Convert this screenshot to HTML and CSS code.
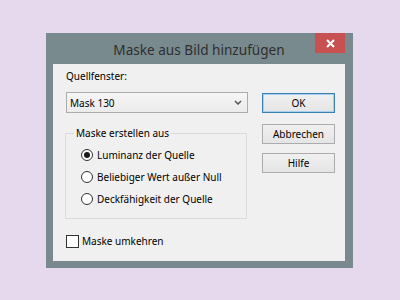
FILE: index.html
```html
<!DOCTYPE html>
<html lang="de">
<head>
<meta charset="utf-8">
<link rel="stylesheet" href="styles.css">
</head>
<body>
<div class="window">
  <div class="titlebar">
    <span></span>
    <span class="title">Maske aus Bild hinzufügen</span>
    <button class="close" aria-label="Schließen">
      <svg width="9" height="9" viewBox="0 0 9 9"><path d="M1 1L8 8M8 1L1 8" stroke="#fff" stroke-width="2" fill="none"/></svg>
    </button>
  </div>
  <div class="client">
    <div class="leftcol">
      <div class="label">Quellfenster:</div>
      <div class="select">
        <span>Mask 130</span>
        <svg width="8" height="5" viewBox="0 0 8 5"><path d="M1 1L4 4L7 1" stroke="#555" stroke-width="1.5" fill="none"/></svg>
      </div>
      <div class="group">
        <span class="legend">Maske erstellen aus</span>
        <div class="radio"><span class="dot checked"></span><span>Luminanz der Quelle</span></div>
        <div class="radio"><span class="dot"></span><span>Beliebiger Wert außer Null</span></div>
        <div class="radio"><span class="dot"></span><span>Deckfähigkeit der Quelle</span></div>
      </div>
      <div class="check"><span class="box"></span><span>Maske umkehren</span></div>
    </div>
    <div class="rightcol">
      <div class="btn default">OK</div>
      <div class="btn">Abbrechen</div>
      <div class="btn">Hilfe</div>
    </div>
  </div>
</div>
</body>
</html>
```
FILE: styles.css
```css
html, body {
  margin: 0;
  padding: 0;
}
body {
  background: #e7d9ed;
  width: 400px;
  height: 300px;
  overflow: hidden;
  font-family: "Noto Sans", "Open Sans", sans-serif;
  font-size: 10px;
  color: #000;
  white-space: nowrap;
}
.window {
  margin: 33px 0 0 46px;
  width: 307px;
  height: 235px;
  box-sizing: border-box;
  background: #798a8f;
  padding: 0 8px 7px 7px;
  display: flex;
  flex-direction: column;
}
.titlebar {
  height: 31px;
  flex-shrink: 0;
  display: grid;
  grid-template-columns: 1fr auto 1fr;
  align-items: center;
}
.title {
  font-size: 13.6px;
  color: #2e2e2e;
  padding-top: 2px;
}
.close {
  justify-self: end;
  align-self: start;
  width: 30px;
  height: 20px;
  border: 0;
  padding: 0;
  margin: 0;
  background: #c75050;
  display: flex;
  align-items: center;
  justify-content: center;
}
.close svg { display: block; }
.client {
  flex: 1;
  background: #f0f0f0;
  display: flex;
}
.leftcol {
  width: 183px;
  flex-shrink: 0;
  margin-left: 12px;
  display: flex;
  flex-direction: column;
}
.label {
  margin: 4px 0 0 1px;
  line-height: 16px;
  height: 16px;
}
.select {
  margin: 8px 0 0 1px;
  height: 21px;
  box-sizing: border-box;
  border: 1px solid #acacac;
  background: linear-gradient(#f6f6f6, #ebebeb);
  display: flex;
  align-items: center;
  justify-content: space-between;
  padding: 0 5px 0 3px;
}
.select svg { display: block; }
.group {
  margin-top: 20px;
  width: 182px;
  height: 86px;
  box-sizing: border-box;
  border: 1px solid #dcdcdc;
  display: flex;
  flex-direction: column;
  padding: 0 0 0 15px;
}
.legend {
  margin: -9px 0 0 -7px;
  align-self: flex-start;
  background: #f0f0f0;
  padding: 0 2px;
  line-height: 16px;
  height: 16px;
}
.radio {
  height: 22px;
  display: flex;
  align-items: center;
}
.group .radio:nth-of-type(1) { margin-top: 3px; }
.dot {
  width: 12px;
  height: 12px;
  flex-shrink: 0;
  box-sizing: border-box;
  border: 1px solid #333;
  border-radius: 50%;
  background: #fff;
  margin-right: 4px;
  display: flex;
  align-items: center;
  justify-content: center;
}
.dot.checked::after {
  content: "";
  width: 6px;
  height: 6px;
  border-radius: 50%;
  background: #1a1a1a;
}
.check {
  margin: 14px 0 0 1px;
  height: 16px;
  display: flex;
  align-items: center;
}
.box {
  width: 13px;
  height: 13px;
  flex-shrink: 0;
  box-sizing: border-box;
  border: 1px solid #333;
  background: #fff;
  margin-right: 3px;
}
.rightcol {
  margin: 29px 0 0 14px;
  display: flex;
  flex-direction: column;
}
.btn {
  width: 73px;
  height: 20px;
  box-sizing: border-box;
  border: 1px solid #acacac;
  background: linear-gradient(#f0f0f0, #e5e5e5);
  display: flex;
  align-items: center;
  justify-content: center;
}
.btn + .btn { margin-top: 11px; }
.btn + .btn + .btn { margin-top: 9px; }
.btn.default {
  border-color: #3c7fb1;
  box-shadow: inset 0 0 0 1px #a6d0f3;
}
```
